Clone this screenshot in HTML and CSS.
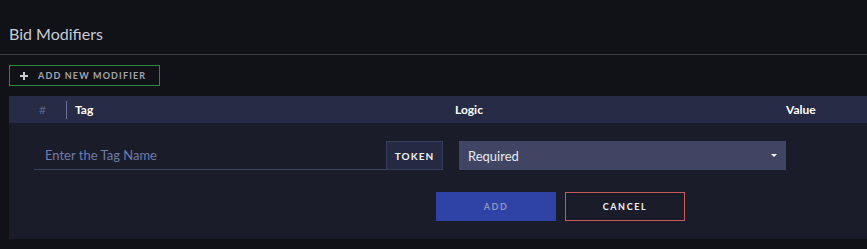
FILE: index.html
```html
<!DOCTYPE html>
<html>
<head>
<meta charset="utf-8">
<link rel="stylesheet" href="styles.css">
</head>
<body>
<div class="page">
  <div class="title-bar"><h1 class="title">Bid Modifiers</h1></div>
  <div class="toolbar">
    <div class="btn-add-mod" role="button">
      <svg class="plus" width="8" height="8" viewBox="0 0 8 8"><path d="M4 0v8M0 4h8" stroke="currentColor" stroke-width="2"/></svg>
      <span>ADD NEW MODIFIER</span>
    </div>
  </div>
  <div class="table">
    <div class="thead">
      <div class="th th-num">#</div>
      <div class="th th-tag">Tag</div>
      <div class="th th-logic">Logic</div>
      <div class="th th-value">Value</div>
    </div>
    <div class="tbody">
      <div class="row-inputs">
        <div class="tag-input"><span class="placeholder">Enter the Tag Name</span></div>
        <div class="token">TOKEN</div>
        <div class="select"><span>Required</span><span class="caret"></span></div>
      </div>
      <div class="row-actions">
        <div class="btn btn-add" role="button">ADD</div>
        <div class="btn btn-cancel" role="button">CANCEL</div>
      </div>
    </div>
  </div>
</div>
</body>
</html>
```
FILE: styles.css
```css
html, body {
  margin: 0;
  padding: 0;
  background: #111217;
  height: 100%;
  overflow: hidden;
}
.page {
  font-family: Lato, "Noto Sans", sans-serif;
  width: 867px;
}
.title-bar {
  height: 55px;
  border-bottom: 1px solid #3b3c42;
  box-sizing: border-box;
  display: flex;
  align-items: flex-end;
  padding: 0 0 10px 9px;
}
.title {
  margin: 0;
  font-size: 16px;
  font-weight: 400;
  color: #c7ccd5;
  line-height: 21px;
}
.toolbar {
  padding: 10px 0 10px 9px;
}
.btn-add-mod {
  display: flex;
  align-items: center;
  height: 21px;
  width: 151px;
  box-sizing: border-box;
  border: 1px solid #2a8a3c;
  color: #a2a4ab;
  font-weight: 700;
  font-size: 9px;
  letter-spacing: 1.15px;
  padding: 0 0 0 10px;
  gap: 10px;
  white-space: nowrap;
}
.plus { color: #c9cbd0; flex: none; }
.table {
  margin-left: 9px;
}
.thead {
  height: 27px;
  background: #272b45;
  display: flex;
  align-items: center;
  font-size: 12px;
  font-weight: 700;
  color: #ffffff;
}
.th-num {
  width: 58px;
  text-align: center;
  padding-left: 10px;
  box-sizing: border-box;
  color: #55628a;
  font-weight: 400;
  border-right: 1px solid #6a7399;
  height: 18px;
  line-height: 18px;
}
.th-tag { width: 380px; padding-left: 8px; }
.th-logic { width: 331px; }
.tbody {
  background: #1b1c29;
  padding: 18px 0 18px 25px;
}
.row-inputs {
  display: flex;
  height: 29px;
}
.tag-input {
  width: 352px;
  box-sizing: border-box;
  border-bottom: 1px solid #3f4563;
  padding-left: 11px;
  display: flex;
  align-items: center;
  font-size: 13px;
}
.placeholder { color: #6d7cab; }
.token {
  width: 57px;
  box-sizing: border-box;
  background: #252a42;
  border: 1px solid #363c5a;
  color: #f0f1f5;
  font-size: 10px;
  font-weight: 700;
  letter-spacing: 1.1px;
  display: flex;
  align-items: center;
  justify-content: center;
}
.select {
  margin-left: 16px;
  width: 327px;
  background: #3f4563;
  display: flex;
  align-items: center;
  justify-content: space-between;
  padding: 0 9px;
  box-sizing: border-box;
  color: #e8eaf2;
  font-size: 13px;
}
.caret {
  width: 0;
  height: 0;
  border-left: 3px solid transparent;
  border-right: 3px solid transparent;
  border-top: 3px solid #ffffff;
}
.row-actions {
  display: flex;
  gap: 9px;
  margin-top: 22px;
  padding-left: 402px;
}
.btn {
  width: 120px;
  height: 29px;
  box-sizing: border-box;
  font-size: 9px;
  font-weight: 700;
  letter-spacing: 1.6px;
  display: flex;
  align-items: center;
  justify-content: center;
}
.btn-add {
  background: #2f43a6;
  color: #8d95bb;
}
.btn-cancel {
  border: 1px solid #c55a5a;
  color: #f2f3f7;
}
```
